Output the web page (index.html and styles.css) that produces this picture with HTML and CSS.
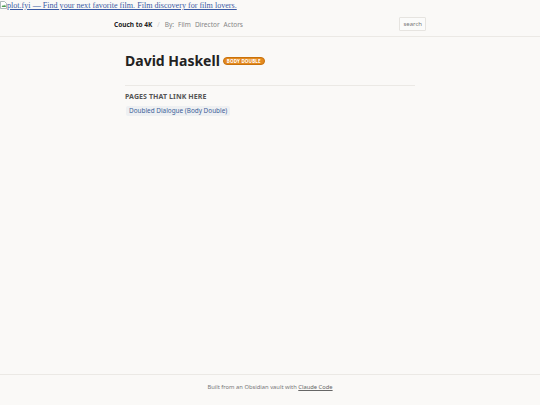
FILE: index.html
```html
<!DOCTYPE html>
<html lang="en">
<head>
<meta charset="utf-8">
<title>David Haskell</title>
<link rel="stylesheet" href="styles.css">
</head>
<body>
<a class="logo" href="#"><svg class="broken" width="7" height="8" viewBox="0 0 7 8"><path d="M0.5 0.5h4l2 2v5h-6z" fill="#fff" stroke="#9aa" stroke-width="0.8"/><path d="M1.5 6l1.5-2 1 1 1-1.5 1 2.5z" fill="#4a9a4a"/></svg>plot.fyi — Find your next favorite film. Film discovery for film lovers.</a>
<header class="site-header">
  <div class="header-inner">
    <nav class="nav">
      <a class="brand" href="#">Couch to 4K</a>
      <span class="sep">/</span>
      <span class="by">By:</span>
      <a class="nav-link" href="#">Film</a>
      <a class="nav-link" href="#">Director</a>
      <a class="nav-link" href="#">Actors</a>
    </nav>
    <div class="search">search</div>
  </div>
</header>
<main class="content">
  <h1 class="title">David Haskell <span class="badge">BODY DOUBLE</span></h1>
  <hr class="rule">
  <h2 class="section-title">PAGES THAT LINK HERE</h2>
  <div class="links">
    <a class="chip" href="#">Doubled Dialogue (Body Double)</a>
  </div>
</main>
<footer class="site-footer">
  Built from an Obsidian vault with <a href="#">Claude Code</a>
</footer>
</body>
</html>
```
FILE: styles.css
```css
html, body {
  margin: 0;
  padding: 0;
}
body {
  background: #faf9f7;
  font-family: "Noto Sans", "Open Sans", sans-serif;
  color: #222;
  min-height: 405px;
  display: flex;
  flex-direction: column;
}
.logo {
  display: block;
  font-family: "Liberation Serif", serif;
  font-size: 8.1px;
  line-height: 12px;
  height: 12px;
  color: #3b5ba5;
  text-decoration: underline;
  white-space: nowrap;
}
.broken {
  vertical-align: -1px;
}
.site-header {
  border-bottom: 1px solid #ebe9e5;
  height: 24px;
}
.header-inner {
  width: 312px;
  margin: 0 auto;
  height: 24px;
  display: flex;
  align-items: center;
  justify-content: space-between;
}
.nav {
  display: flex;
  align-items: center;
  font-size: 6.5px;
  gap: 5px;
}
.nav a {
  text-decoration: none;
}
.brand {
  font-weight: 700;
  color: #222;
}
.sep {
  color: #ccc;
}
.by, .nav-link {
  color: #858585;
}
.nav-link { margin-left: -1px; }
.search {
  font-size: 6px;
  color: #777;
  border: 1px solid #e6e4e0;
  background: #fbfbfa;
  padding: 2px 3px;
  line-height: 8px;
  border-radius: 1px;
}
.content {
  width: 290px;
  margin: 0 auto;
  flex: 1;
  padding-top: 14px;
}
.title {
  margin: 0;
  font-size: 14px;
  font-weight: 700;
  line-height: 20px;
  color: #222;
  display: flex;
  align-items: center;
  gap: 3px;
}
.badge {
  font-size: 4.6px;
  line-height: 6px;
  font-weight: 700;
  color: #fff;
  background: #e48a20;
  border: 1px solid #c8720c;
  border-radius: 4px;
  padding: 0 3px;
  letter-spacing: 0.1px;
}
.rule {
  border: 0;
  border-top: 1px solid #ebe9e5;
  margin: 14px 0 0;
}
.section-title {
  font-size: 7px;
  font-weight: 700;
  color: #555;
  letter-spacing: 0.1px;
  margin: 6px 0 4px;
  line-height: 10px;
}
.links {
  display: flex;
}
.chip {
  font-size: 6.4px;
  line-height: 10px;
  color: #3d5f99;
  background: #eef0f2;
  padding: 0 3px;
  margin-left: 1px;
  border-radius: 2px;
  text-decoration: none;
}
.site-footer {
  border-top: 1px solid #ebe9e5;
  text-align: center;
  font-size: 5.8px;
  color: #777;
  height: 30px;
  line-height: 24px;
}
.site-footer a {
  color: #666;
  text-decoration: underline;
}
```
